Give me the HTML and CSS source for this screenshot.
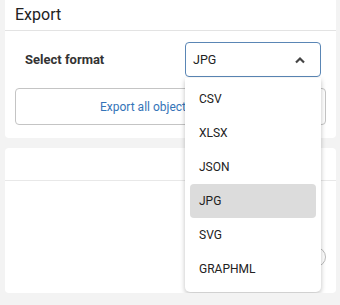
FILE: index.html
```html
<!DOCTYPE html>
<html lang="en">
<head>
  <meta charset="UTF-8" />
  <title>Export</title>
  <link rel="stylesheet" href="styles.css">
</head>
<body>
  <div class="page">
    <div class="card">
      <div class="card-header">Export</div>
      <div class="card-body">
        <div class="field">
          <span class="label">Select format</span>
          <div class="select">
            <div class="select-box">
              <span>JPG</span>
              <svg class="chevron" width="12" height="8" viewBox="0 0 12 8">
                <path d="M2 6.5 L6 2.5 L10 6.5" fill="none" stroke="#444" stroke-width="2.2" />
              </svg>
            </div>
            <ul class="menu">
              <li>CSV</li>
              <li>XLSX</li>
              <li>JSON</li>
              <li class="active">JPG</li>
              <li>SVG</li>
              <li>GRAPHML</li>
            </ul>
          </div>
        </div>
        <button class="export-btn">Export all objects</button>
      </div>
    </div>

    <div class="card second">
      <div class="card-top"></div>
      <div class="card-rest">
        <span class="toggle"></span>
      </div>
    </div>
  </div>
</body>
</html>
```

FILE: styles.css
```css
body {
  margin: 0;
  background: #f3f3f3;
  font-family: Roboto, "Liberation Sans", sans-serif;
  color: #222;
}
.page {
  padding: 0 4px 0 5px;
}
.card {
  background: #fff;
  border-radius: 0 0 4px 4px;
}
.card-header {
  height: 30px;
  padding: 0 10px;
  font-size: 16px;
  line-height: 30px;
  color: #222;
  border-bottom: 1px solid #e3e3e3;
}
.card-body {
  padding: 11px 10px 13px 10px;
}
.field {
  display: flex;
  align-items: center;
  height: 35px;
}
.label {
  flex: none;
  width: 160px;
  padding-left: 10px;
  font-size: 13px;
  font-weight: bold;
  color: #333;
}
.select {
  position: relative;
  flex: none;
  width: 136px;
}
.select-box {
  height: 33px;
  border: 1px solid #5a86b5;
  border-radius: 4px;
  display: flex;
  align-items: center;
  justify-content: space-between;
  padding: 0 14px 0 7px;
  font-size: 12.5px;
  color: #222;
}
.chevron {
  display: block;
}
.menu {
  position: absolute;
  top: 36px;
  left: 0;
  width: 136px;
  margin: 0;
  padding: 4px 0 6px 0;
  list-style: none;
  background: #fff;
  border-radius: 0 0 5px 5px;
  box-shadow: 0 2px 5px rgba(0, 0, 0, 0.25);
  z-index: 2;
}
.menu li {
  height: 34px;
  line-height: 34px;
  margin: 0 5px;
  padding-left: 9px;
  font-size: 12px;
  color: #222;
  border-radius: 4px;
}
.menu li.active {
  background: #dcdcdc;
}
.export-btn {
  display: block;
  width: 100%;
  height: 37px;
  margin-top: 11px;
  padding: 0 0 0 84px;
  text-align: left;
  background: #fff;
  border: 1.5px solid #c4c4c4;
  border-radius: 4px;
  font-family: inherit;
  font-size: 12px;
  color: #3474b8;
}
.second {
  margin-top: 10px;
  height: 145px;
  border-radius: 4px;
}
.card-top {
  height: 32px;
  border-bottom: 1px solid #e8e8e8;
}
.card-rest {
  display: flex;
  justify-content: flex-end;
  padding: 66px 10px 0 0;
}
.toggle {
  width: 18px;
  height: 18px;
  border: 1.5px solid #bbb;
  border-radius: 50%;
}
```
